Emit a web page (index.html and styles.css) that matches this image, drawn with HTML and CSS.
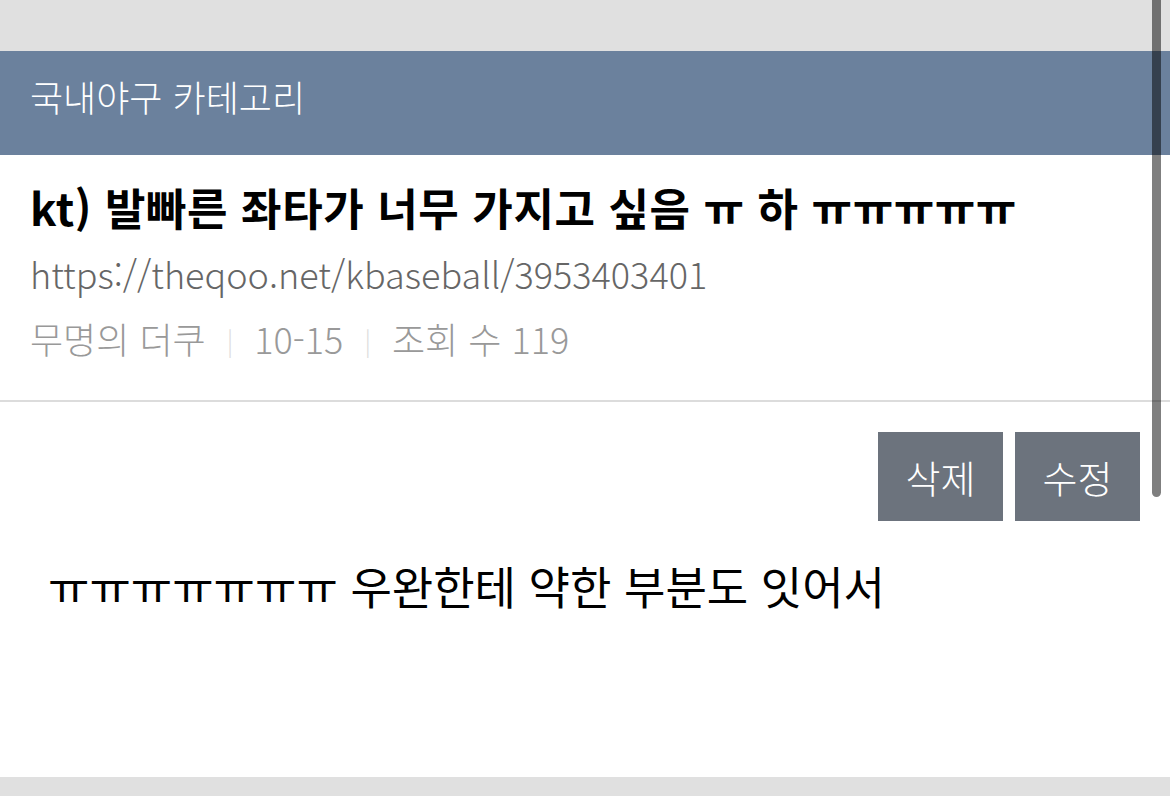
FILE: index.html
```html
<!DOCTYPE html>
<html lang="ko">
<head>
<meta charset="utf-8">
<link rel="stylesheet" href="styles.css">
</head>
<body>
<div class="page">
  <header class="board-head">국내야구 카테고리</header>
  <main class="post">
    <section class="post-head">
      <h1 class="title">kt) 발빠른 좌타가 너무 가지고 싶음 ㅠ 하 ㅠㅠㅠㅠㅠ</h1>
      <div class="url">https://theqoo.net/kbaseball/3953403401</div>
      <div class="meta">
        <span>무명의 더쿠</span><span class="sep">|</span><span>10-15</span><span class="sep">|</span><span>조회 수 119</span>
      </div>
    </section>
    <div class="actions">
      <button class="btn">삭제</button>
      <button class="btn">수정</button>
    </div>
    <article class="content">ㅠㅠㅠㅠㅠㅠㅠ 우완한테 약한 부분도 잇어서</article>
  </main>
</div>
<div class="scrollbar"></div>
</body>
</html>
```
FILE: styles.css
```css
html, body {
  margin: 0;
  padding: 0;
}
body {
  background: #e0e0e0;
  font-family: "Noto Sans CJK KR", "Noto Sans", sans-serif;
  width: 1170px;
  height: 796px;
  overflow: hidden;
  position: relative;
}
.page {
  padding-top: 51px;
}
.board-head {
  height: 104px;
  box-sizing: border-box;
  background: #6b819d;
  color: #fff;
  display: flex;
  align-items: center;
  padding: 0 0 14px 30px;
  font-size: 36px;
  font-weight: 300;
}
.post {
  background: #fff;
  height: 622px;
  display: flex;
  flex-direction: column;
}
.post-head {
  padding: 18px 30px 28px;
  border-bottom: 2px solid #dcdcdc;
}
.title {
  margin: 0;
  font-size: 44px;
  font-weight: 700;
  line-height: 68px;
  color: #000;
  letter-spacing: 0.6px;
}
.url {
  font-size: 36px;
  color: #666;
  line-height: 65px;
  font-weight: 300;
}
.meta {
  font-size: 36px;
  color: #999;
  line-height: 65px;
  font-weight: 300;
}
.meta .num {
  letter-spacing: -0.5px;
}
.sep {
  color: #ddd;
  font-size: 26px;
  margin: 0 21px;
  vertical-align: 3px;
}
.actions {
  display: flex;
  justify-content: flex-end;
  gap: 12px;
  padding: 30px 30px 0;
}
.btn {
  width: 125px;
  height: 89px;
  background: #6c737d;
  color: #fff;
  border: none;
  font-family: inherit;
  font-size: 38px;
  font-weight: 300;
  padding: 0;
}
.content {
  padding: 32px 48px;
  font-size: 45px;
  color: #000;
  font-weight: 400;
}
.scrollbar {
  position: absolute;
  left: 1152px;
  top: 0;
  width: 9px;
  height: 497px;
  background: rgba(0, 0, 0, 0.5);
  border-radius: 0 0 5px 5px;
}
```
